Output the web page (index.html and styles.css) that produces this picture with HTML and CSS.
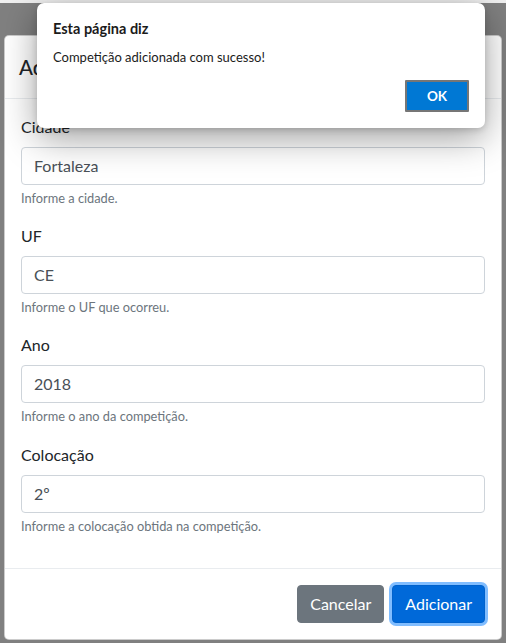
FILE: index.html
```html
<!DOCTYPE html>
<html lang="pt-BR">
<head>
<meta charset="utf-8">
<title>Adicionar Competição</title>
<link rel="stylesheet" href="styles.css">
</head>
<body>
<div class="topbar"></div>
<div class="modal">
  <div class="modal-header">
    <h5 class="modal-title">Adicionar Competição</h5>
  </div>
  <div class="modal-body">
    <div class="form-group">
      <label>Cidade</label>
      <div class="form-control">Fortaleza</div>
      <small class="form-text">Informe a cidade.</small>
    </div>
    <div class="form-group">
      <label>UF</label>
      <div class="form-control">CE</div>
      <small class="form-text">Informe o UF que ocorreu.</small>
    </div>
    <div class="form-group">
      <label>Ano</label>
      <div class="form-control">2018</div>
      <small class="form-text">Informe o ano da competição.</small>
    </div>
    <div class="form-group">
      <label>Colocação</label>
      <div class="form-control">2º</div>
      <small class="form-text">Informe a colocação obtida na competição.</small>
    </div>
  </div>
  <div class="modal-footer">
    <button class="btn btn-secondary">Cancelar</button>
    <button class="btn btn-primary">Adicionar</button>
  </div>
</div>
<div class="alert-dialog">
  <div class="alert-title">Esta página diz</div>
  <div class="alert-message">Competição adicionada com sucesso!</div>
  <div class="alert-actions">
    <button class="alert-ok">OK</button>
  </div>
</div>
</body>
</html>
```
FILE: styles.css
```css
html, body {
  margin: 0;
  padding: 0;
}
body {
  background: #808080;
  font-family: Lato, "Noto Sans", sans-serif;
  width: 506px;
  height: 643px;
  overflow: hidden;
  position: relative;
}
.topbar {
  height: 3px;
  background: #f0f0f0;
}
.modal {
  margin: 32px 4px 0 4px;
  background: #fff;
  border: 1px solid rgba(0,0,0,.2);
  border-radius: 5px;
  display: flex;
  flex-direction: column;
}
.modal-header {
  padding: 16px;
  border-bottom: 1px solid #e9ecef;
}
.modal-title {
  margin: 0 0 0 -2px;
  font-size: 20.5px;
  line-height: 30px;
  font-weight: 500;
  color: #212529;
}
.modal-body {
  padding: 16px;
}
.form-group {
  margin-bottom: 16px;
  display: flex;
  flex-direction: column;
  align-items: flex-start;
}
.form-group label {
  font-size: 16px;
  line-height: 24px;
  color: #212529;
  margin-bottom: 8px;
}
.form-control {
  box-sizing: border-box;
  width: 100%;
  height: 38px;
  padding: 6px 12px;
  font-size: 16px;
  line-height: 24px;
  color: #495057;
  border: 1px solid #ced4da;
  border-radius: 4px;
  background: #fff;
}
.form-text {
  margin-top: 4px;
  font-size: 12.8px;
  line-height: 19.2px;
  color: #6c757d;
}
.modal-footer {
  padding: 16px;
  border-top: 1px solid #e9ecef;
  display: flex;
  justify-content: flex-end;
  gap: 8px;
}
.btn {
  font-family: inherit;
  font-size: 16px;
  line-height: 24px;
  padding: 6px 12px;
  border-radius: 4px;
  border: 1px solid transparent;
  color: #fff;
}
.btn-secondary {
  background: #6c757d;
  border-color: #6c757d;
}
.btn-primary {
  background: #0069d9;
  border-color: #0062cc;
  box-shadow: 0 0 0 3px #80bdff;
}
.alert-dialog {
  position: absolute;
  left: 37px;
  top: 3px;
  width: 448px;
  height: 125px;
  box-sizing: border-box;
  padding: 16px;
  background: #fff;
  border-radius: 7px;
  box-shadow: 0 10px 36px rgba(0,0,0,.38), 0 2px 6px rgba(0,0,0,.15);
  color: #1b1b1b;
  display: flex;
  flex-direction: column;
}
.alert-title {
  font-size: 14.5px;
  font-weight: 700;
  line-height: 20px;
}
.alert-message {
  margin-top: 8px;
  font-size: 13px;
  line-height: 20px;
}
.alert-actions {
  margin-top: 13px;
  display: flex;
  justify-content: flex-end;
}
.alert-ok {
  width: 64px;
  height: 32px;
  box-sizing: border-box;
  background: #0078d4;
  color: #fff;
  font-family: inherit;
  font-weight: 700;
  font-size: 13.5px;
  border: 2px solid #fff;
  outline: 2px solid #767676;
  outline-offset: -2px;
  border-radius: 1px;
  padding: 0;
}
```
